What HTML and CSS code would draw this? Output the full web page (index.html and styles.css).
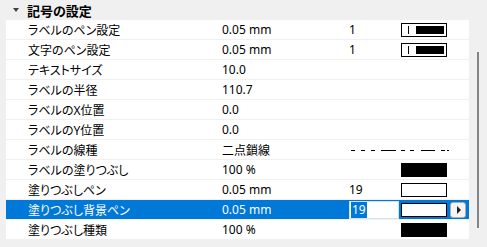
FILE: index.html
```html
<!DOCTYPE html>
<html lang="ja">
<head>
  <meta charset="UTF-8">
  <title>記号の設定</title>
  <link rel="stylesheet" href="styles.css">
</head>
<body>

  <div class="sheet">
    <div class="group-head">
      <span class="caret"></span>
      <strong>記号の設定</strong>
    </div>

    <div class="rows">
      <div class="row">
        <span>ラベルのペン設定</span><span>0.05 mm</span><span>1</span>
        <span class="swatch pen"><i class="tick"></i><i class="bar"></i></span>
      </div>
      <div class="row">
        <span>文字のペン設定</span><span>0.05 mm</span><span>1</span>
        <span class="swatch pen"><i class="tick"></i><i class="bar"></i></span>
      </div>
      <div class="row">
        <span>テキストサイズ</span><span>10.0</span>
      </div>
      <div class="row">
        <span>ラベルの半径</span><span>110.7</span>
      </div>
      <div class="row">
        <span>ラベルのX位置</span><span>0.0</span>
      </div>
      <div class="row">
        <span>ラベルのY位置</span><span>0.0</span>
      </div>
      <div class="row">
        <span>ラベルの線種</span><span>二点鎖線</span>
        <svg class="linetype" width="100" height="20" viewBox="0 0 100 20">
          <path d="M0 10.5h4M10 10.5h4M20 10.5h4M30 10.5h15M50 10.5h4M59 10.5h4M70 10.5h14M90 10.5h4M96 10.5h2" stroke="#000" stroke-width="1" fill="none"/>
        </svg>
      </div>
      <div class="row">
        <span>ラベルの塗りつぶし</span><span>100 %</span><span></span>
        <span class="swatch solid"></span>
      </div>
      <div class="row">
        <span>塗りつぶしペン</span><span>0.05 mm</span><span>19</span>
        <span class="swatch empty"></span>
      </div>
      <div class="row selected">
        <span>塗りつぶし背景ペン</span><span>0.05 mm</span>
        <span class="editor"><span class="picked">19</span></span>
        <span class="swatch empty"></span>
        <span class="more"></span>
      </div>
      <div class="row">
        <span>塗りつぶし種類</span><span>100 %</span><span></span>
        <span class="swatch solid"></span>
      </div>
    </div>
  </div>

  <div class="scrollbar">
    <div class="thumb"></div>
  </div>

</body>
</html>
```

FILE: styles.css
```css
body {
  margin: 0;
  height: 247px;
  overflow: hidden;
  display: flex;
  background-color: #f0f0f0;
  font-family: "Noto Sans", "Noto Sans CJK JP", sans-serif;
  font-feature-settings: "palt";
  font-size: 12px;
  color: #000;
}

.sheet {
  width: 469px;
}

.group-head {
  height: 20px;
  display: flex;
  align-items: center;
  padding-left: 13px;
  gap: 8px;
}

.group-head strong {
  font-size: 13px;
}

.caret {
  width: 0;
  height: 0;
  border-left: 3px solid transparent;
  border-right: 3px solid transparent;
  border-top: 4px solid #404040;
}

.rows {
  margin-left: 6px;
  background-color: white;
}

.row {
  height: 19px;
  border-bottom: 1px solid #f0f0f0;
  display: grid;
  grid-template-columns: 194px 127px 52px 46px 22px;
  align-items: center;
  padding-left: 22px;
  white-space: nowrap;
}

.row.selected {
  background-color: #0078d7;
  color: white;
}

.swatch {
  height: 14px;
  box-sizing: border-box;
  display: flex;
  align-items: center;
}

.swatch.pen {
  border: 1px solid black;
  padding: 0 2px 0 6px;
}

.swatch.pen .tick {
  width: 1px;
  height: 8px;
  background-color: black;
}

.swatch.pen .bar {
  margin-left: 7px;
  flex: 1;
  height: 8px;
  background-color: black;
}

.swatch.solid {
  background-color: black;
}

.swatch.empty {
  background-color: white;
  border: 1px solid black;
}

.linetype {
  grid-column: 3 / span 3;
  margin-left: 2px;
}

.editor {
  height: 18px;
  margin-right: 2px;
  box-sizing: border-box;
  border: 1px solid #cfe3f5;
  background-color: white;
  display: flex;
  align-items: center;
  padding-left: 1px;
}

.picked {
  background-color: #0078d7;
  color: white;
  height: 16px;
  line-height: 16px;
  padding: 0 1px;
}

.more {
  margin-left: 3px;
  width: 16px;
  height: 16px;
  box-sizing: border-box;
  border: 1px solid #adadad;
  border-radius: 3px;
  background-color: #f4f4f4;
  display: flex;
  align-items: center;
  justify-content: center;
}

.more::before {
  content: "";
  border-top: 4px solid transparent;
  border-bottom: 4px solid transparent;
  border-left: 4px solid #222;
  margin-left: 2px;
}

.scrollbar {
  width: 18px;
  position: relative;
}

.thumb {
  position: absolute;
  left: 8px;
  top: 52px;
  width: 2px;
  height: 176px;
  background-color: #858585;
}
```
